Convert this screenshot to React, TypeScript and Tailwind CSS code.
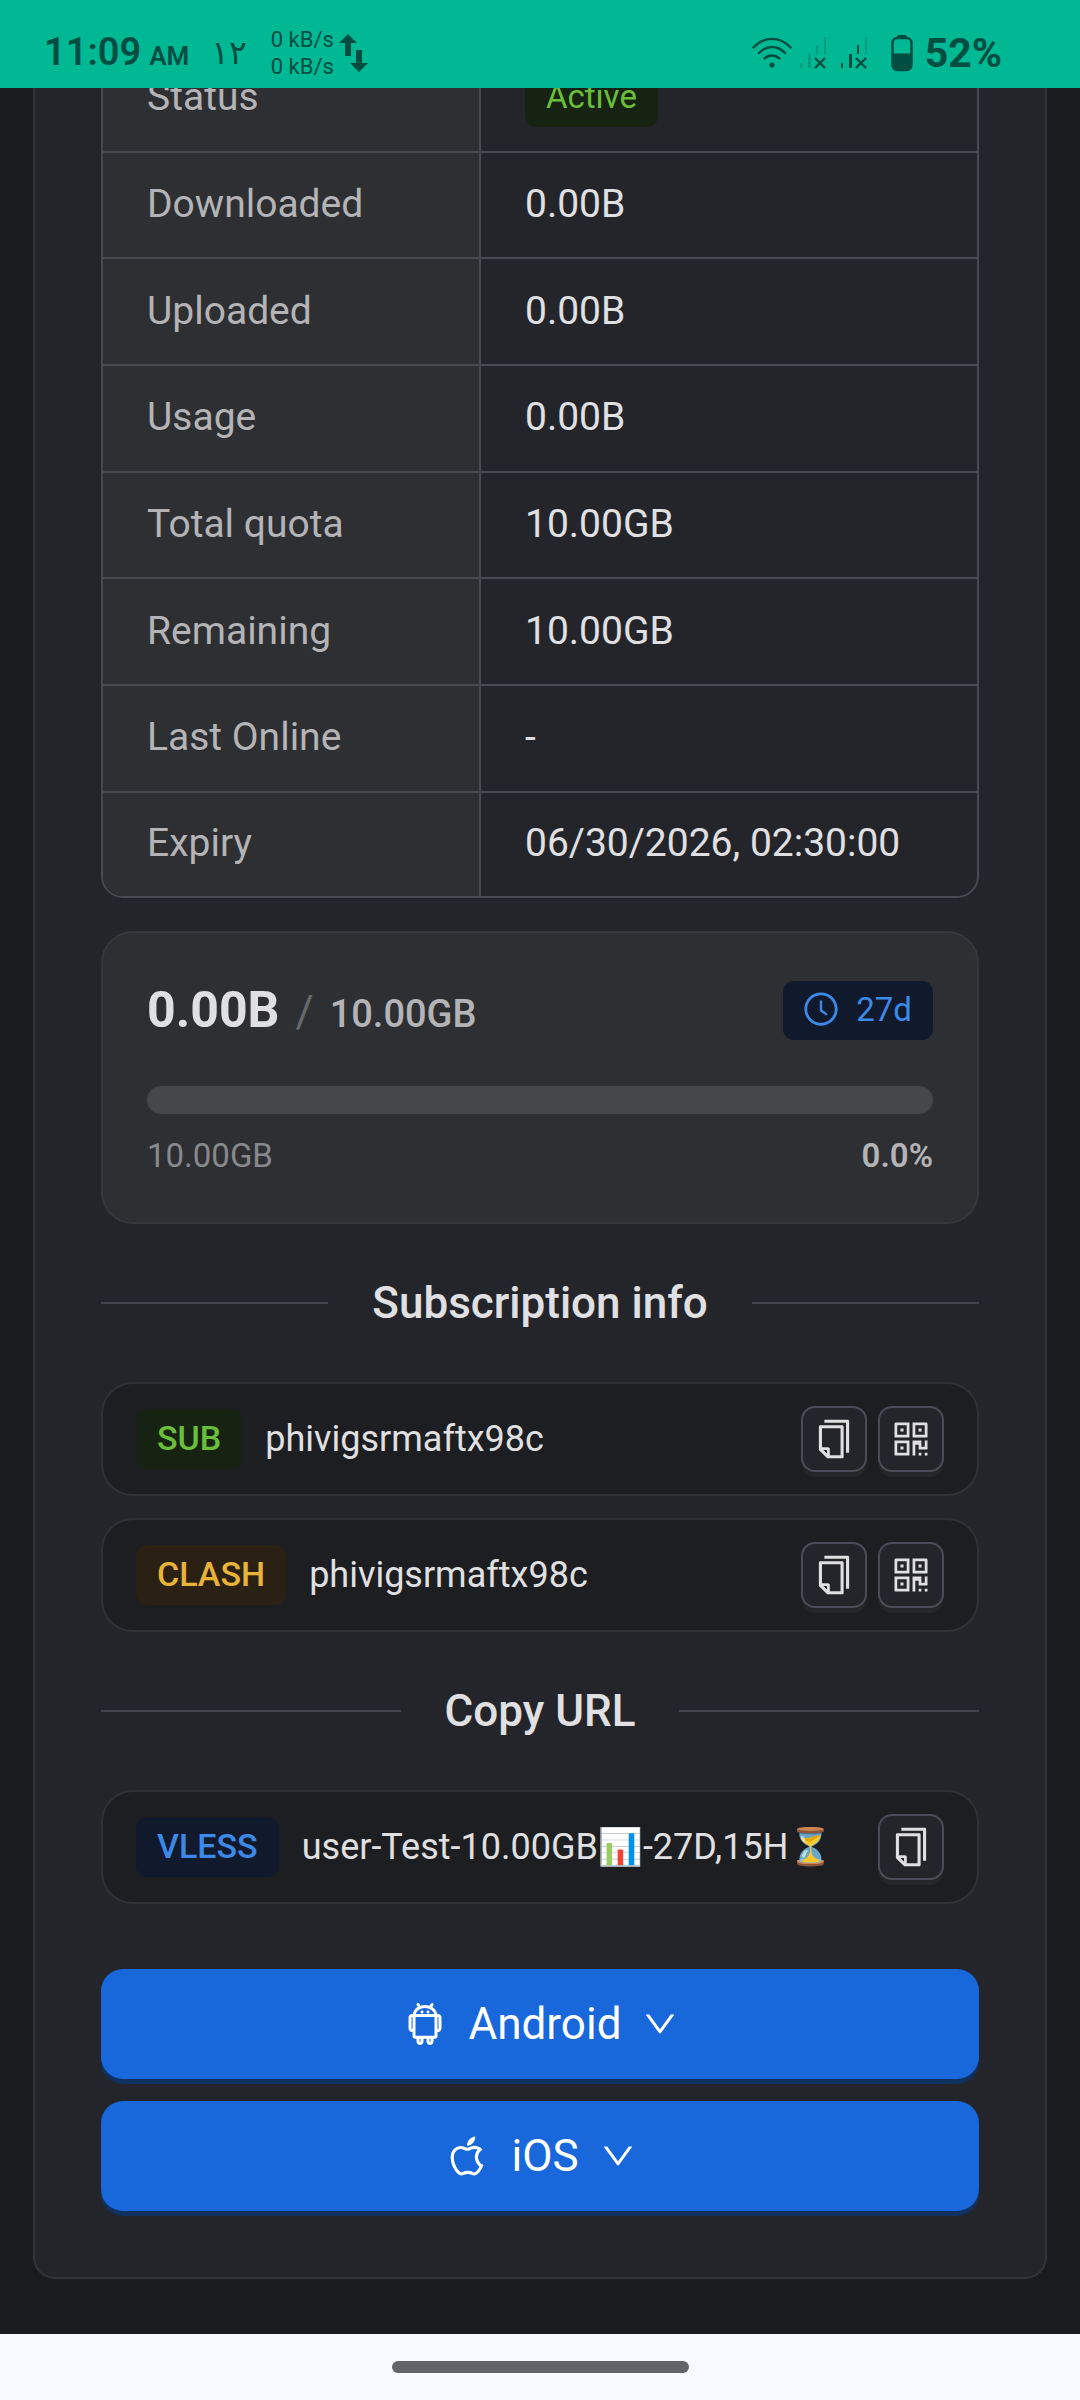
import { ReactNode } from "react";
import {
  AiOutlineAndroid,
  AiOutlineApple,
  AiOutlineClockCircle,
  AiOutlineCopy,
  AiOutlineDown,
  AiOutlineQrcode,
} from "react-icons/ai";

const details = [
  { label: "Status", value: "Active", tag: true },
  { label: "Downloaded", value: "0.00B" },
  { label: "Uploaded", value: "0.00B" },
  { label: "Usage", value: "0.00B" },
  { label: "Total quota", value: "10.00GB" },
  { label: "Remaining", value: "10.00GB" },
  { label: "Last Online", value: "-" },
  { label: "Expiry", value: "06/30/2026, 02:30:00" },
];

const tagColors = {
  green: "bg-[#162312] text-[#6abe39]",
  gold: "bg-[#2b2014] text-[#e8b339]",
  blue: "bg-[#111a2c] text-[#3c89e8]",
};

function Signal({ dim }: { dim?: boolean }) {
  return (
    <svg width="28" height="34" viewBox="0 0 28 34" fill="currentColor">
      <g opacity={dim ? 0.25 : 1}>
        <rect x="1" y="27" width="2" height="5" />
        <rect x="9" y="18" width="3" height="14" />
        <rect x="17" y="9" width="2" height="9" />
      </g>
      <rect x="25" y="1" width="2" height="17" opacity="0.25" />
      <path
        d="M16 22l10 10M26 22l-10 10"
        stroke="currentColor"
        strokeWidth="2.400"
        fill="none"
      />
    </svg>
  );
}

function StatusBar() {
  return (
    <header className="flex h-[88px] items-center justify-between bg-[#00b894] pt-[18px] pr-[78px] pl-[44px] text-[#004d42]">
      <div className="flex items-center">
        <div className="flex items-baseline gap-2 font-semibold">
          <span className="text-[38px] leading-[44px]">11:09</span>
          <span className="text-[26px]">AM</span>
        </div>
        <span className="ml-[22px] font-['DejaVu_Sans',sans-serif] text-[33px] leading-[44px]">
          ۱۲
        </span>
        <div className="ml-[24px] text-[22px] leading-[27px]">
          <p>0 kB/s</p>
          <p>0 kB/s</p>
        </div>
        <svg
          className="ml-[5px]"
          width="30"
          height="40"
          viewBox="0 0 30 40"
          fill="currentColor"
        >
          <path d="M9 1l9 9h-6v13H6V10H0z" />
          <path d="M20 39l-9-9h6V17h6v13h6z" />
        </svg>
      </div>
      <div className="flex items-center">
        <svg
          width="40"
          height="32"
          viewBox="0 0 40 32"
          fill="none"
          stroke="currentColor"
          strokeWidth="2.4"
          strokeLinecap="round"
        >
          <path d="M1.500 10.500C12-1 28-1 38.500 10.500M7 16c7.500-8 18.500-8 26 0M12.500 21.500c4.500-4 10.500-4 15 0" />
          <circle
            cx="20"
            cy="28"
            r="2.600"
            fill="currentColor"
            stroke="none"
          />
        </svg>
        <div className="ml-[7px] flex gap-[13px]">
          <Signal dim />
          <Signal />
        </div>
        <svg
          className="ml-[23px]"
          width="22"
          height="37"
          viewBox="0 0 22 37"
          fill="currentColor"
        >
          <rect x="6" y="0" width="10" height="4" rx="2" />
          <rect
            x="1.500"
            y="3"
            width="19"
            height="32"
            rx="5"
            fill="none"
            stroke="currentColor"
            strokeWidth="2.500"
          />
          <path d="M1 18.500h20V31a5 5 0 0 1-5 5H6a5 5 0 0 1-5-5z" />
        </svg>
        <span className="ml-[12px] text-[41px] leading-[44px] font-bold">
          52%
        </span>
      </div>
    </header>
  );
}

function SectionTitle({ children }: { children: ReactNode }) {
  return (
    <div className="my-[44px] flex items-center gap-[44px]">
      <span className="h-[2px] flex-1 bg-[#43444b]" />
      <h2 className="text-[44px] leading-[70px] font-medium">{children}</h2>
      <span className="h-[2px] flex-1 bg-[#43444b]" />
    </div>
  );
}

function IconButton({
  label,
  children,
}: {
  label: string;
  children: ReactNode;
}) {
  return (
    <button
      aria-label={label}
      className="flex size-[66px] cursor-pointer items-center justify-center rounded-[14px] border-2 border-[#4b4b5a] bg-[#24252a] text-[44px] shadow-[0_5px_0_rgba(255,255,255,0.03)]"
    >
      {children}
    </button>
  );
}

function LinkRow({
  tag,
  color,
  text,
  qr,
}: {
  tag: string;
  color: keyof typeof tagColors;
  text: ReactNode;
  qr?: boolean;
}) {
  return (
    <li className="flex items-center rounded-4xl border-2 border-[#303135] bg-[#1d1e21] px-[33px] py-[22px]">
      <span
        className={`rounded-[11px] px-[21px] pb-[2px] text-[34px] leading-[58px] font-medium ${tagColors[color]}`}
      >
        {tag}
      </span>
      <span className="ml-[23px] flex-1 truncate text-[36px] leading-[56px]">
        {text}
      </span>
      <div className="flex gap-[11px]">
        <IconButton label={`Copy ${tag}`}>
          <AiOutlineCopy />
        </IconButton>
        {qr && (
          <IconButton label={`QR code ${tag}`}>
            <AiOutlineQrcode />
          </IconButton>
        )}
      </div>
    </li>
  );
}

function AppButton({ icon, name }: { icon: ReactNode; name: string }) {
  return (
    <button className="flex h-[110px] w-full cursor-pointer items-center justify-center gap-[20px] rounded-[22px] bg-[#1868dc] text-[44px] text-white shadow-[0_5px_0_#10305f]">
      <span className="text-[48px]">{icon}</span>
      <span>{name}</span>
      <AiOutlineDown className="text-[38px]" />
    </button>
  );
}

function App() {
  return (
    <div className="flex min-h-screen flex-col bg-[#1a1b1f] font-[Roboto,sans-serif] text-[#e0e0e2]">
      <StatusBar />

      <main className="flex-1 overflow-hidden px-[33px] pb-[55px]">
        <div className="flex flex-col rounded-b-[22px] border-2 border-t-0 border-[#323337] bg-[#24252a] px-[66px] pb-[66px]">
          {/* scrolled half under the status bar */}
          <div className="-mt-[44px] overflow-hidden rounded-[22px] border-2 border-[#494a51]">
            <table className="h-[850px] w-full border-separate border-spacing-0 text-left text-[39px] leading-[60px]">
              <tbody>
                {details.map((item) => (
                  <tr key={item.label} className="group">
                    <th className="w-[378px] border-r-2 border-b-2 border-[#494a51] bg-[#2e2f33] px-[44px] pt-0 pb-[2px] font-normal text-[#b4b4b7] group-last:border-b-0">
                      {item.label}
                    </th>
                    <td className="border-b-2 border-[#494a51] px-[44px] pt-0 pb-[2px] group-last:border-b-0">
                      {item.tag ? (
                        <span
                          className={`block w-fit rounded-[11px] px-[21px] text-[33px] ${tagColors.green}`}
                        >
                          {item.value}
                        </span>
                      ) : (
                        item.value
                      )}
                    </td>
                  </tr>
                ))}
              </tbody>
            </table>
          </div>

          <section className="mt-[33px] rounded-4xl border-2 border-[#36373b] bg-[#2e2f33] p-[44px]">
            <div className="flex h-[66px] items-center justify-between">
              <div className="flex items-baseline leading-none">
                <span className="text-[50px] leading-[66px] font-bold">
                  0.00B
                </span>
                <span className="mx-[16px] text-[44px] text-[#68696c]">/</span>
                <span className="text-[38px] font-medium text-[#b4b4b7]">
                  10.00GB
                </span>
              </div>
              <span
                className={`flex items-center gap-[16px] rounded-[11px] pr-[21px] pb-[2px] pl-[19px] text-[33px] leading-[57px] ${tagColors.blue}`}
              >
                <AiOutlineClockCircle className="text-[38px]" />
                27d
              </span>
            </div>
            <div
              role="progressbar"
              aria-label="Usage"
              aria-valuenow={0}
              className="mt-[43px] h-[28px] rounded-full bg-[#464749]"
            />
            <div className="mt-[20px] flex justify-between text-[33px] leading-[44px]">
              <span className="text-[#88898c]">10.00GB</span>
              <span className="font-semibold text-[#b4b4b7]">0.0%</span>
            </div>
          </section>

          <SectionTitle>Subscription info</SectionTitle>
          <ul className="flex flex-col gap-[22px]">
            <LinkRow tag="SUB" color="green" text="phivigsrmaftx98c" qr />
            <LinkRow tag="CLASH" color="gold" text="phivigsrmaftx98c" qr />
          </ul>

          <SectionTitle>Copy URL</SectionTitle>
          <ul>
            <LinkRow
              tag="VLESS"
              color="blue"
              text="user-Test-10.00GB📊-27D,15H⏳"
            />
          </ul>

          <div className="mt-[65px] flex flex-col gap-[22px]">
            <AppButton icon={<AiOutlineAndroid />} name="Android" />
            <AppButton icon={<AiOutlineApple />} name="iOS" />
          </div>
        </div>
      </main>

      <footer className="flex h-[66px] items-center justify-center bg-[#f8f9fe]">
        <span className="h-[12px] w-[297px] rounded-full bg-[#636468]" />
      </footer>
    </div>
  );
}

export default App;
